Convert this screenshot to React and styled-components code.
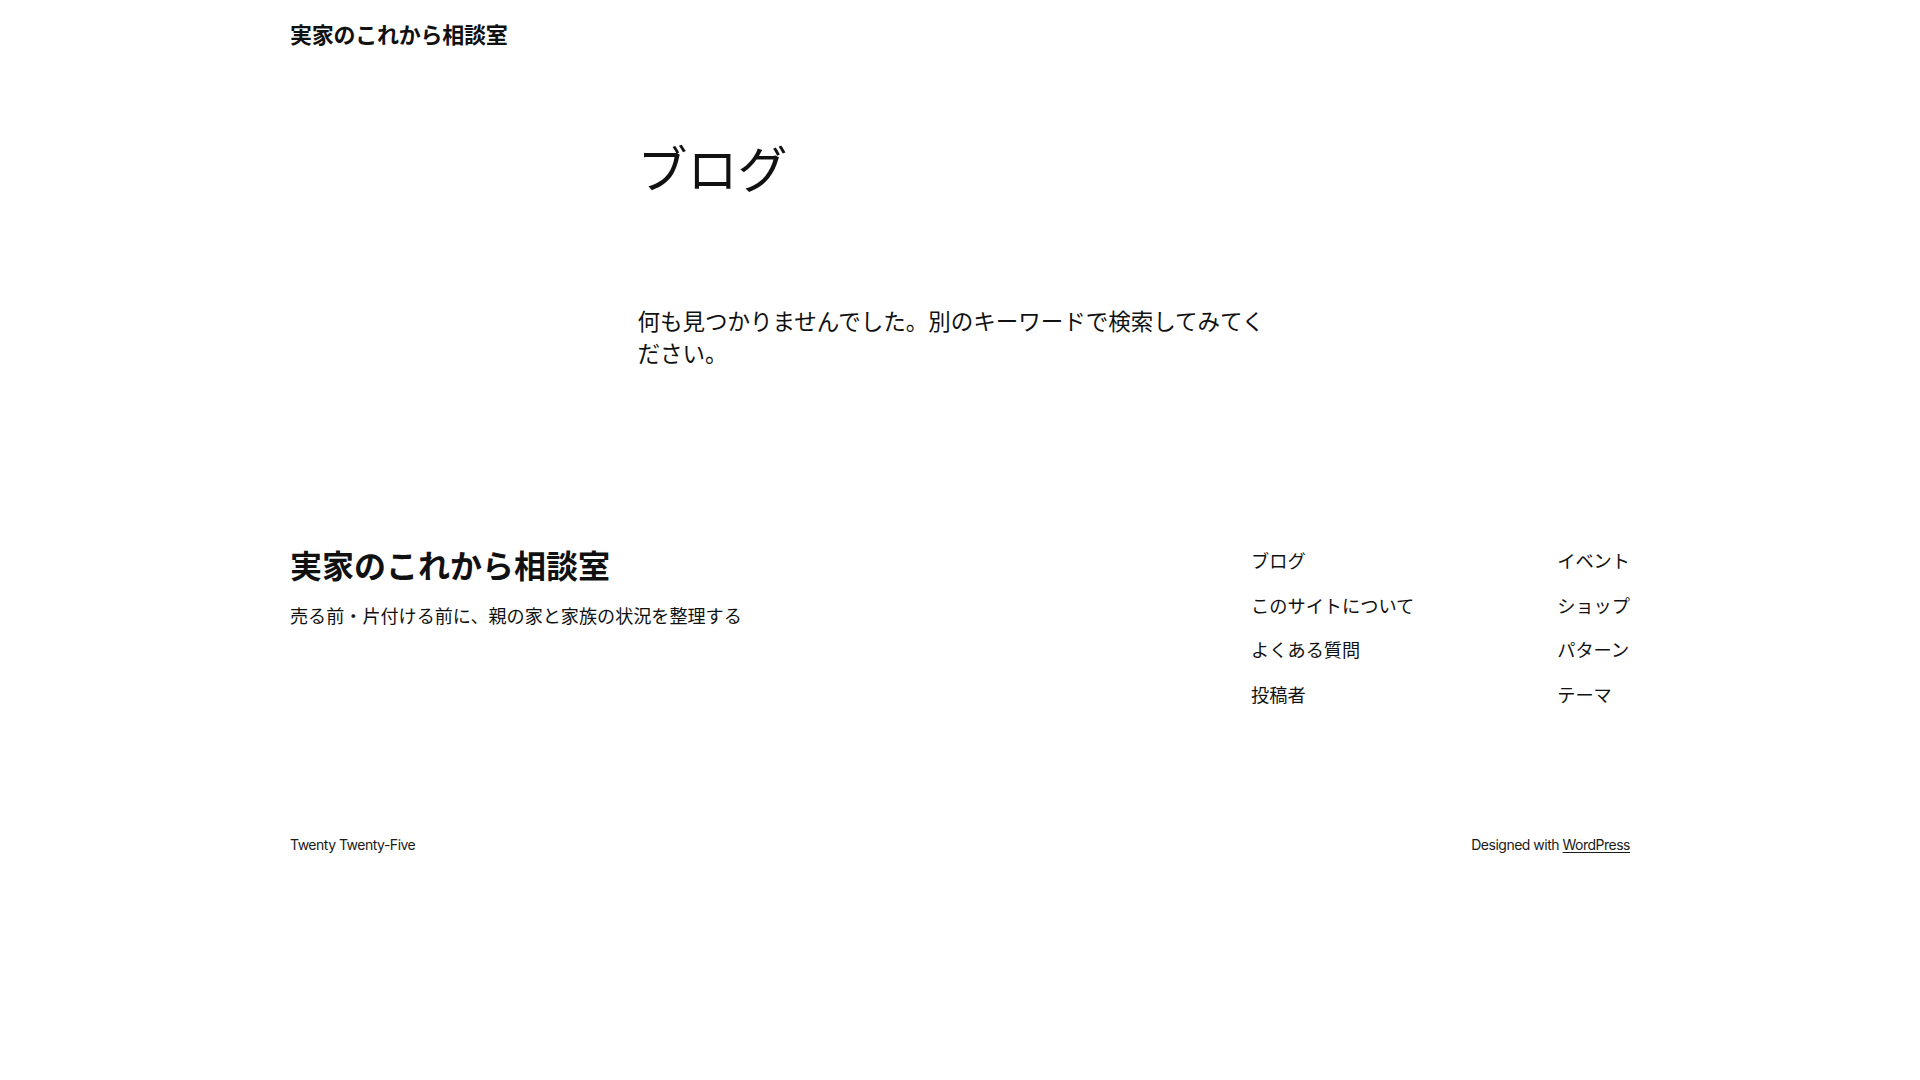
import React from 'react';
import styled, { createGlobalStyle } from 'styled-components';

const GlobalStyle = createGlobalStyle`
  html, body {
    margin: 0;
    padding: 0;
    background: #ffffff;
  }
  body {
    color: #111111;
    font-family: Inter, "Noto Sans CJK JP", sans-serif;
    -webkit-font-smoothing: antialiased;
  }
  * {
    box-sizing: border-box;
  }
`;

const Page = styled.div`
  min-height: 100vh;
  display: flex;
  flex-direction: column;
`;

const Wide = styled.div`
  width: 1340px;
  margin: 0 auto;
`;

const Header = styled.header`
  padding: 20px 0;
`;

const SiteTitle = styled.a`
  display: inline-block;
  color: #111111;
  text-decoration: none;
  font-size: ${(p) => (p.$large ? '32px' : '22px')};
  font-weight: 700;
  letter-spacing: ${(p) => (p.$large ? '0' : '-0.25px')};
  line-height: ${(p) => (p.$large ? 1.1 : 1.4)};
`;

const Main = styled.main`
  width: 645px;
  margin: 0 auto;
  padding-top: 71px;
`;

const PageTitle = styled.h1`
  margin: 0;
  font-size: 50px;
  font-weight: 400;
  line-height: 1.125;
`;

const Message = styled.p`
  margin: 108px 0 0;
  font-size: 22.5px;
  line-height: 1.4;
`;

const Footer = styled.footer`
  padding-top: 179px;
`;

const FooterTop = styled.div`
  display: flex;
  justify-content: space-between;
  align-items: flex-start;
`;

const Brand = styled.div`
  display: flex;
  flex-direction: column;
  gap: 20px;
  padding-top: 1px;
`;

const Tagline = styled.p`
  margin: 0;
  font-size: 18.1px;
  line-height: 1.4;
`;

const NavGroup = styled.div`
  display: flex;
  gap: 143px;
  padding-top: 1px;
`;

const NavList = styled.nav`
  display: flex;
  flex-direction: column;
  gap: 19px;
`;

const NavLink = styled.a`
  color: #111111;
  text-decoration: none;
  font-size: 18.2px;
  line-height: 1.4;
`;

const FooterBottom = styled.div`
  display: flex;
  justify-content: space-between;
  align-items: center;
  margin-top: 126px;
  font-size: 14px;
  letter-spacing: -0.5px;
  line-height: 1.5;
  color: #1a1a1a;
`;

const Credit = styled.p`
  margin: 0;

  a {
    color: #1a1a1a;
    text-decoration: underline;
    text-underline-offset: 2px;
    text-decoration-thickness: 1px;
  }
`;

const leftLinks = ['ブログ', 'このサイトについて', 'よくある質問', '投稿者'];
const rightLinks = ['イベント', 'ショップ', 'パターン', 'テーマ'];

const App = () => (
  <Page>
    <GlobalStyle />
    <Header>
      <Wide>
        <SiteTitle href="#">実家のこれから相談室</SiteTitle>
      </Wide>
    </Header>

    <Main>
      <PageTitle>ブログ</PageTitle>
      <Message>何も見つかりませんでした。別のキーワードで検索してみてください。</Message>
    </Main>

    <Footer>
      <Wide>
        <FooterTop>
          <Brand>
            <SiteTitle href="#" $large>実家のこれから相談室</SiteTitle>
            <Tagline>売る前・片付ける前に、親の家と家族の状況を整理する</Tagline>
          </Brand>
          <NavGroup>
            <NavList>
              {leftLinks.map((label) => (
                <NavLink key={label} href="#">{label}</NavLink>
              ))}
            </NavList>
            <NavList>
              {rightLinks.map((label) => (
                <NavLink key={label} href="#">{label}</NavLink>
              ))}
            </NavList>
          </NavGroup>
        </FooterTop>
        <FooterBottom>
          <Credit>Twenty Twenty-Five</Credit>
          <Credit>
            Designed with <a href="#">WordPress</a>
          </Credit>
        </FooterBottom>
      </Wide>
    </Footer>
  </Page>
);

export default App;
